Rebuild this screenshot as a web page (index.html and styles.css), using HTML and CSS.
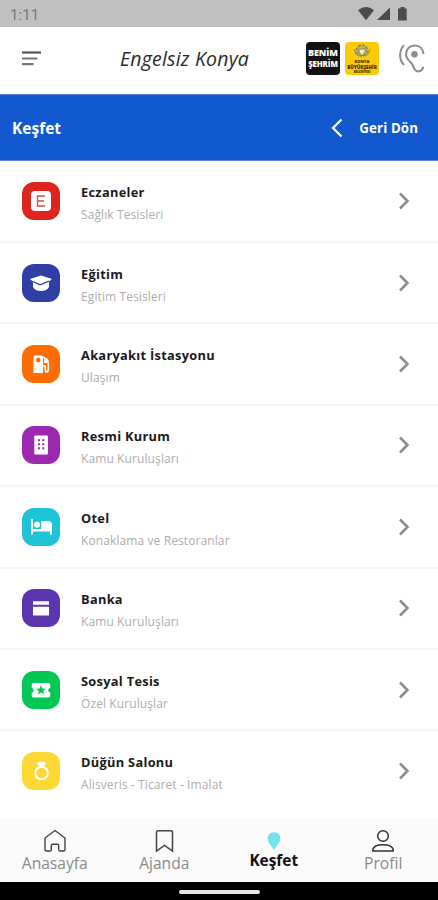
FILE: index.html
```html
<!DOCTYPE html>
<html lang="tr">
<head>
    <meta charset="UTF-8">
    <meta name="viewport" content="width=device-width, initial-scale=1.0">
    <title>Engelsiz Konya</title>
    <link rel="stylesheet" href="styles.css">
</head>
<body>
    <!-- Status bar -->
    <div class="status_bar">
        <span class="clock">1:11</span>
        <svg class="status_icons" width="50" height="14" viewBox="0 0 50 14" fill="#4b4b4b">
            <path d="M0 3.2Q8 -3 16 3.2L8 13.2Z"/>
            <path d="M32 0.5V13H19Z"/>
            <path d="M42.5 0h4v1.6h2.2V13.6H40V1.6h2.5Z"/>
        </svg>
    </div>

    <!-- Header -->
    <header>
        <svg class="menu" width="19" height="15" viewBox="0 0 19 15" stroke="#777" stroke-width="2.2">
            <path d="M0 1.5H19" stroke="#555"/>
            <path d="M0 7.5H15.3M0 13.2H11.6"/>
        </svg>
        <h1>Engelsiz Konya</h1>
        <div class="logo logo_black">
            <span>BENİM</span>
            <span class="second">ŞEHRİM</span>
        </div>
        <div class="logo logo_yellow">
            <svg width="18" height="15" viewBox="0 0 18 15">
                <circle cx="9" cy="6.5" r="5.5" fill="#c5b56b" stroke="#8d8548" stroke-width="1.6" stroke-dasharray="3 1.2"/>
                <path d="M6 5h6v3l-3 4-3-4Z" fill="#f1e8b5" stroke="#6f7460" stroke-width="0.8"/>
                <path d="M1 5l2 5 3 2M17 5l-2 5-3 2" fill="none" stroke="#a99a41" stroke-width="1.3"/>
            </svg>
            <span class="city">KONYA</span>
            <span class="city_big">BÜYÜKŞEHİR</span>
            <span class="city_small">BELEDİYESİ</span>
        </div>
        <svg class="ear" width="26" height="29" viewBox="0 0 26 29" fill="none" stroke="#8c8c8c" stroke-width="2">
            <path d="M5 1.2C-0.2 7-0.2 15.5 5 21"/>
            <path d="M24.5 10C24 4.8 20.4 1.6 15.8 1.6C10.6 1.6 7 5.3 7 10.2C7 14.6 10 16.6 12.3 19C14.8 21.6 14.6 27.4 19 27.4C21.8 27.4 23.8 25.6 24.4 22.8"/>
            <circle cx="15.5" cy="10.3" r="3.2" fill="#8c8c8c" stroke="none"/>
        </svg>
    </header>

    <!-- Page title -->
    <section class="title_bar">
        <h2>Keşfet</h2>
        <a class="back">
            <svg width="12" height="20" viewBox="0 0 12 20" fill="none" stroke="#fff" stroke-width="2.3">
                <path d="M10.5 1.5L2 10L10.5 18.5"/>
            </svg>
            <span>Geri Dön</span>
        </a>
    </section>

    <!-- Categories -->
    <main>
        <div class="row">
            <div class="icon red">
                <svg width="24" height="24" viewBox="0 0 24 24">
                    <rect x="2" y="2" width="20" height="20" rx="4" fill="#fff"/>
                    <path d="M16 7H8.5V17H16M8.5 12H15" fill="none" stroke="#dd4a45" stroke-width="1.3"/>
                </svg>
            </div>
            <div class="text">
                <h3>Eczaneler</h3>
                <p>Sağlık Tesisleri</p>
            </div>
            <svg class="arrow" width="12" height="18" viewBox="0 0 12 18"><path d="M2 1.5L9.5 9L2 16.5"/></svg>
        </div>

        <div class="row">
            <div class="icon blue">
                <svg width="24" height="24" viewBox="0 0 24 24">
                    <path d="M1 8L12 4.5L23 8L20 10.5V16Q18 20 12 20Q6 20 4 16V10.5Z" fill="#fff"/>
                    <path d="M4 10.5L10 13.3Q12 14.2 14 12.6L20 10" fill="none" stroke="#303fa5" stroke-width="1.3"/>
                </svg>
            </div>
            <div class="text">
                <h3>Eğitim</h3>
                <p>Egitim Tesisleri</p>
            </div>
            <svg class="arrow" width="12" height="18" viewBox="0 0 12 18"><path d="M2 1.5L9.5 9L2 16.5"/></svg>
        </div>

        <div class="row">
            <div class="icon orange">
                <svg width="24" height="24" viewBox="0 0 24 24">
                    <path d="M4.5 5.5Q4.5 3.5 6.5 3.5H12Q14 3.5 14 5.5V21H4.5Z" fill="#fff"/>
                    <circle cx="9.2" cy="8" r="2.3" fill="#ff6d00"/>
                    <path d="M14 5L18 7.5Q19.3 9 19.3 12V17.5Q19.3 19.8 17.8 19.8Q16.2 19.8 16.2 17.5V14H14" fill="none" stroke="#fff" stroke-width="1.7"/>
                    <path d="M15 6H18V11H15Z" fill="#fff"/>
                </svg>
            </div>
            <div class="text">
                <h3>Akaryakıt İstasyonu</h3>
                <p>Ulaşım</p>
            </div>
            <svg class="arrow" width="12" height="18" viewBox="0 0 12 18"><path d="M2 1.5L9.5 9L2 16.5"/></svg>
        </div>

        <div class="row">
            <div class="icon purple">
                <svg width="24" height="24" viewBox="0 0 24 24">
                    <rect x="5.3" y="2.4" width="13.6" height="19.2" rx="1" fill="#fff"/>
                    <path d="M9 6.2h2v2H9zM13.3 6.2h2v2h-2zM9 10.2h2v2H9zM13.3 10.2h2v2h-2zM9 14.2h2v2H9zM13.3 14.2h2v2h-2z" fill="#9c27b0"/>
                </svg>
            </div>
            <div class="text">
                <h3>Resmi Kurum</h3>
                <p>Kamu Kuruluşları</p>
            </div>
            <svg class="arrow" width="12" height="18" viewBox="0 0 12 18"><path d="M2 1.5L9.5 9L2 16.5"/></svg>
        </div>

        <div class="row">
            <div class="icon cyan">
                <svg width="24" height="24" viewBox="0 0 24 24" fill="#fff">
                    <path d="M2 4H4V14H12V6H19Q23 6 23 10V19.5H21V16.5H4V19.5H2Z"/>
                    <circle cx="8" cy="9.8" r="3"/>
                </svg>
            </div>
            <div class="text">
                <h3>Otel</h3>
                <p>Konaklama ve Restoranlar</p>
            </div>
            <svg class="arrow" width="12" height="18" viewBox="0 0 12 18"><path d="M2 1.5L9.5 9L2 16.5"/></svg>
        </div>

        <div class="row">
            <div class="icon violet">
                <svg width="24" height="24" viewBox="0 0 24 24" fill="#fff">
                    <path d="M4 5.2H20V8.7H4ZM4 10.8H20V19.5H4Z"/>
                </svg>
            </div>
            <div class="text">
                <h3>Banka</h3>
                <p>Kamu Kuruluşları</p>
            </div>
            <svg class="arrow" width="12" height="18" viewBox="0 0 12 18"><path d="M2 1.5L9.5 9L2 16.5"/></svg>
        </div>

        <div class="row">
            <div class="icon green">
                <svg width="24" height="24" viewBox="0 0 24 24">
                    <path d="M4.5 5H19.5Q21.3 5 21.3 7V9.8Q19.2 10.4 19.2 12.2Q19.2 14 21.3 14.6V17.5Q21.3 19.5 19.5 19.5H4.5Q2.7 19.5 2.7 17.5V14.6Q4.8 14 4.8 12.2Q4.8 10.4 2.7 9.8V7Q2.7 5 4.5 5Z" fill="#fff"/>
                    <path d="M12 7L13.3 10.6L17 10.7L14.1 12.9L15.1 16.5L12 14.4L8.9 16.5L9.9 12.9L7 10.7L10.7 10.6Z" fill="#00c853"/>
                </svg>
            </div>
            <div class="text">
                <h3>Sosyal Tesis</h3>
                <p>Özel Kuruluşlar</p>
            </div>
            <svg class="arrow" width="12" height="18" viewBox="0 0 12 18"><path d="M2 1.5L9.5 9L2 16.5"/></svg>
        </div>

        <div class="row">
            <div class="icon yellow">
                <svg width="24" height="24" viewBox="0 0 24 24">
                    <circle cx="12.5" cy="14" r="6.3" fill="none" stroke="#fff" stroke-width="1.9"/>
                    <path d="M9.5 3H15.5L17 5L12.5 9L8 5Z" fill="#fff"/>
                </svg>
            </div>
            <div class="text">
                <h3>Düğün Salonu</h3>
                <p>Alisveris - Ticaret - İmalat</p>
            </div>
            <svg class="arrow" width="12" height="18" viewBox="0 0 12 18"><path d="M2 1.5L9.5 9L2 16.5"/></svg>
        </div>
    </main>

    <!-- Bottom menu -->
    <nav>
        <a class="tab">
            <svg width="22" height="24" viewBox="0 0 22 24" fill="none" stroke="#444" stroke-width="1.4">
                <path d="M1 9L11 1.5L21 9V20.5Q21 22 19.5 22H16Q14.7 22 14.7 20.7V16.5Q14.7 15.3 13.5 15.3H8.5Q7.3 15.3 7.3 16.5V20.7Q7.3 22 6 22H2.5Q1 22 1 20.5Z"/>
            </svg>
            <span>Anasayfa</span>
        </a>
        <a class="tab">
            <svg width="22" height="24" viewBox="0 0 22 24" fill="none" stroke="#444" stroke-width="1.5">
                <path d="M3.5 3.2Q3.5 1.7 5 1.7H18Q19.5 1.7 19.5 3.2V22L11.5 16.5L3.5 22Z"/>
            </svg>
            <span>Ajanda</span>
        </a>
        <a class="tab active">
            <svg width="22" height="24" viewBox="0 0 22 24" fill="#74e2ee">
                <path d="M11 3.2C15 3.2 17.4 6 17.4 9.4C17.4 13.5 13 17.5 11 20.8C9 17.5 4.6 13.5 4.6 9.4C4.6 6 7 3.2 11 3.2Z"/>
            </svg>
            <span>Keşfet</span>
        </a>
        <a class="tab">
            <svg width="22" height="24" viewBox="0 0 22 24" fill="none" stroke="#333" stroke-width="1.5">
                <circle cx="11" cy="7" r="5.3"/>
                <path d="M0.8 22V20.5Q2 15.7 11 15.7Q20 15.7 21.2 20.5V22Z"/>
            </svg>
            <span>Profil</span>
        </a>
    </nav>

    <footer>
        <div class="home_line"></div>
    </footer>
</body>
</html>
```
FILE: styles.css
```css
body {
    font-family: "Open Sans", "Noto Sans", sans-serif;
    background-color: #fff;
    margin: 0;
    width: 438px;
    height: 900px;
    display: flex;
    flex-direction: column;
    overflow: hidden;
}

h1, h2, h3, p {
    margin: 0;
}

svg {
    display: block;
    flex-shrink: 0;
}

.status_bar {
    height: 27px;
    flex-shrink: 0;
    background-color: #c0c0c0;
    display: flex;
    justify-content: space-between;
    align-items: center;
    box-sizing: border-box;
    padding: 1px 30px 0 10px;
}

.clock {
    font-family: Roboto, sans-serif;
    font-size: 15px;
    letter-spacing: 0.1px;
    padding-top: 1px;
    color: #777;
}

header {
    height: 67px;
    flex-shrink: 0;
    box-sizing: border-box;
    display: flex;
    align-items: center;
    padding: 0 13px 4px 22px;
}

h1 {
    width: 130px;
    margin: 0 56px 0 79px;
    font-size: 19.5px;
    font-weight: 400;
    font-style: italic;
    letter-spacing: 0.2px;
    white-space: nowrap;
    color: #2a2a2a;
}

.logo {
    width: 34px;
    height: 33px;
    border-radius: 4px;
    display: flex;
    flex-direction: column;
    align-items: center;
    justify-content: center;
    overflow: hidden;
}

.logo_black {
    background-color: #111;
    color: #fff;
    font-size: 9px;
    font-weight: 800;
    line-height: 12px;
    letter-spacing: -0.1px;
}

.logo_black .second {
    font-size: 7.8px;
    line-height: 11px;
}

.logo_yellow {
    background-color: #fbcb05;
    color: #3a3000;
    margin: 0 20px 0 5px;
    font-weight: 800;
}

.city {
    font-size: 4px;
    line-height: 5px;
}

.city_big {
    font-size: 4.6px;
    line-height: 6px;
}

.city_small {
    font-size: 3px;
    line-height: 4px;
}

.title_bar {
    height: 67px;
    flex-shrink: 0;
    box-sizing: border-box;
    background-color: #1258ce;
    color: #fff;
    border-top: 1px solid #5f83dc;
    border-bottom: 1px solid #5f83dc;
    display: flex;
    justify-content: space-between;
    align-items: center;
    padding: 0 20px 0 12px;
}

h2 {
    font-size: 15.5px;
    font-weight: 700;
}

.back {
    display: flex;
    align-items: center;
    gap: 16px;
    font-size: 13.3px;
    font-weight: 700;
    letter-spacing: 0.1px;
}

main {
    height: 657px;
    flex-shrink: 0;
}

.row {
    height: 81.4px;
    box-sizing: border-box;
    border-bottom: 2px solid #f5f5f5;
    display: flex;
    align-items: center;
    padding: 0 28px 0 21.5px;
}

.row:first-child {
    height: 82px;
}

.row:last-child {
    border-bottom-color: #fff;
}

.icon {
    width: 38px;
    height: 38px;
    border-radius: 12px;
    display: flex;
    align-items: center;
    justify-content: center;
}

.red { background-color: #dc251e; }
.blue { background-color: #303fa5; }
.orange { background-color: #ff6d00; }
.purple { background-color: #9c27b0; }
.cyan { background-color: #1fc3d6; }
.violet { background-color: #5e35b1; }
.green { background-color: #00c853; }
.yellow { background-color: #fdd835; }

.text {
    flex: 1;
    margin-left: 21.5px;
    padding-top: 6px;
}

h3 {
    font-size: 12.8px;
    line-height: 22px;
    font-weight: 700;
    letter-spacing: 0.3px;
    color: #1a1a1a;
}

.text p {
    font-size: 12px;
    line-height: 24px;
    letter-spacing: 0.1px;
    color: #adadad;
}

.arrow {
    fill: none;
    stroke: #8c8c8c;
    stroke-width: 2.5;
}

nav {
    height: 64px;
    flex-shrink: 0;
    background-color: #fafafa;
    display: grid;
    grid-template-columns: repeat(4, 1fr);
}

.tab {
    display: flex;
    flex-direction: column;
    align-items: center;
    padding-top: 10.5px;
    font-size: 15.6px;
    line-height: 20px;
    color: #8a8a8a;
}

.active {
    font-size: 15.4px;
    font-weight: 700;
    line-height: 16px;
    color: #111;
}

footer {
    height: 18px;
    flex-shrink: 0;
    background-color: #000;
    display: flex;
    align-items: center;
    justify-content: center;
}

.home_line {
    width: 81px;
    height: 4px;
    margin-top: 1px;
    border-radius: 2px;
    background-color: #e6e6e6;
}
```
